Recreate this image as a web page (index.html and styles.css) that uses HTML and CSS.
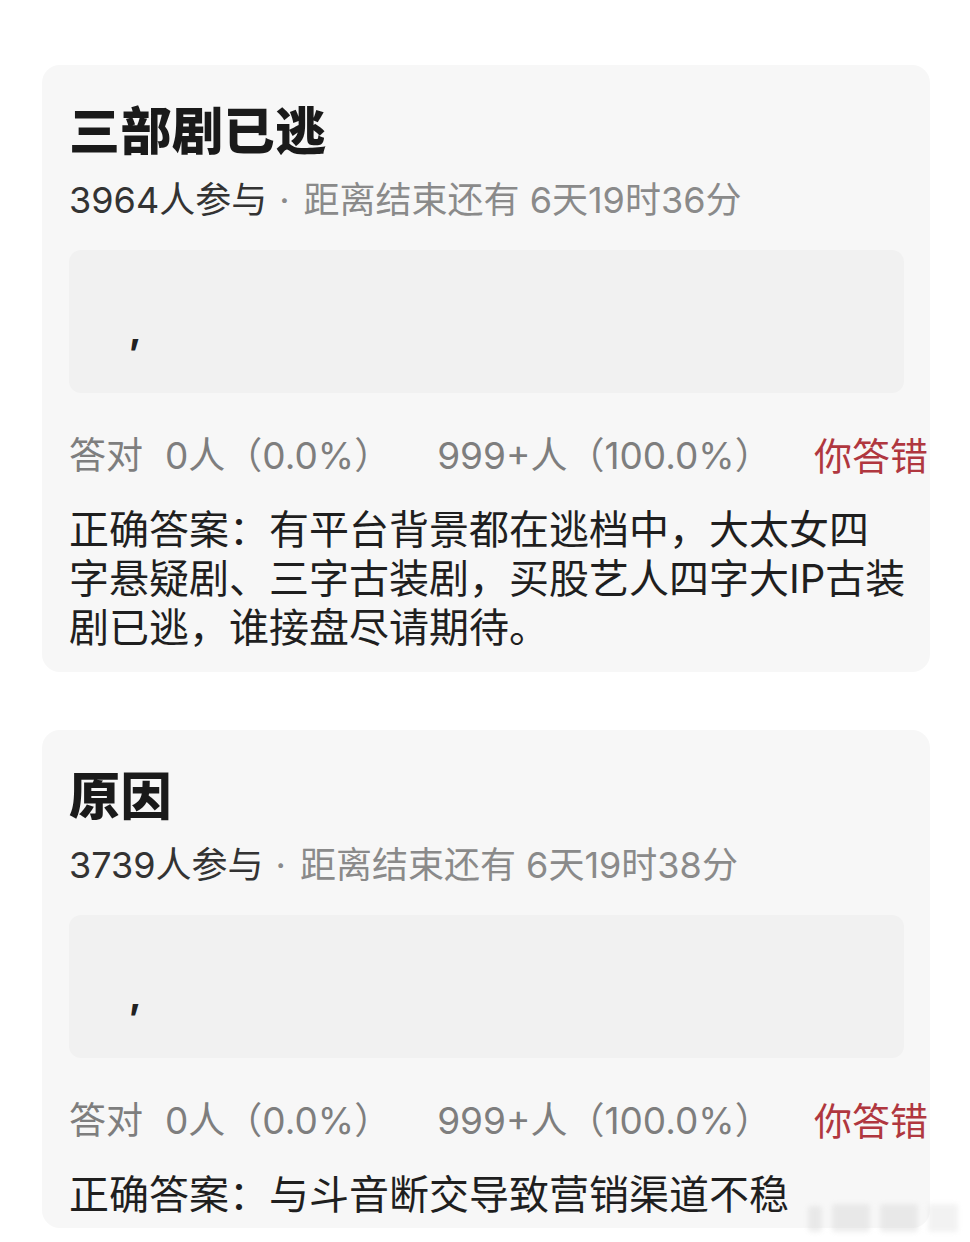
FILE: index.html
```html
<!DOCTYPE html>
<html lang="zh-CN">
<head>
<meta charset="utf-8">
<title>竞猜</title>
<link rel="stylesheet" href="styles.css">
</head>
<body>
<main class="feed">
  <section class="card">
    <h2 class="title">三部剧已逃</h2>
    <p class="meta"><span class="meta-count">3964人参与</span><span class="meta-sep">·</span><span class="meta-time">距离结束还有 6天19时36分</span></p>
    <div class="option"><span class="option-text">,</span></div>
    <div class="stats">
      <span class="stat-label">答对</span>
      <span class="stat-value">0人（0.0%）</span>
      <span class="stat-value stat-value--wide">999+人（100.0%）</span>
      <span class="verdict">你答错</span>
    </div>
    <p class="answer">正确答案：有平台背景都在逃档中，大太女四字悬疑剧、三字古装剧，买股艺人四字大IP古装剧已逃，谁接盘尽请期待。</p>
  </section>

  <section class="card card--tight">
    <h2 class="title">原因</h2>
    <p class="meta"><span class="meta-count">3739人参与</span><span class="meta-sep">·</span><span class="meta-time">距离结束还有 6天19时38分</span></p>
    <div class="option"><span class="option-text">,</span></div>
    <div class="stats">
      <span class="stat-label">答对</span>
      <span class="stat-value">0人（0.0%）</span>
      <span class="stat-value stat-value--wide">999+人（100.0%）</span>
      <span class="verdict">你答错</span>
    </div>
    <p class="answer">正确答案：与斗音断交导致营销渠道不稳</p>
  </section>
</main>
<div class="watermark" aria-hidden="true">
  <span class="wm-block wm-block--thin"></span>
  <span class="wm-block"></span>
  <span class="wm-block"></span>
  <span class="wm-block wm-block--light"></span>
</div>
</body>
</html>
```

FILE: styles.css
```css
html, body {
  margin: 0;
  padding: 0;
  background: #ffffff;
}

body {
  font-family: Inter, "Noto Sans CJK SC", sans-serif;
  color: #1f1f1f;
  width: 970px;
  min-height: 1242px;
  position: relative;
  overflow: hidden;
}

.feed {
  display: flex;
  flex-direction: column;
  gap: 58px;
  padding: 65px 0 0 42px;
}

.card {
  width: 888px;
  box-sizing: border-box;
  background: #f7f7f7;
  border-radius: 18px;
  padding: 33px 22px 20px 27px;
}

.card--tight {
  padding-bottom: 9px;
}

.title {
  margin: 0;
  font-family: "Noto Sans CJK SC", sans-serif;
  font-size: 51px;
  line-height: 60px;
  font-weight: 900;
  color: #1a1a1a;
  letter-spacing: 0.5px;
}

.meta {
  margin: 18px 0 0;
  font-size: 36px;
  line-height: 48px;
  color: #8a8a8a;
  white-space: nowrap;
}

.meta-count {
  color: #333333;
}

.meta-sep {
  margin: 0 14px 0 12px;
}

.option {
  margin: 26px 4px 0 0;
  height: 143px;
  background: #f1f1f1;
  border-radius: 12px;
  display: flex;
  align-items: center;
  padding-left: 60px;
  box-sizing: border-box;
}

.option-text {
  font-size: 38px;
  font-weight: 700;
  color: #222222;
  line-height: 48px;
  padding-top: 14px;
}

.stats {
  margin-top: 38px;
  margin-right: -20px;
  display: flex;
  align-items: center;
  font-size: 37px;
  line-height: 50px;
  color: #7e7e7e;
  white-space: nowrap;
}

.stat-label {
  margin-right: 22px;
}

.stat-value--wide {
  margin-left: 46px;
}

.verdict {
  margin-left: auto;
  color: #b0373f;
  font-size: 38px;
}

.answer {
  margin: 24px 0 0;
  font-size: 40px;
  line-height: 49px;
  color: #1f1f1f;
}

/* faint site watermark in the lower right corner */
.watermark {
  position: absolute;
  right: 12px;
  bottom: 10px;
  display: flex;
  align-items: flex-end;
  gap: 10px;
  filter: blur(2.5px);
  opacity: 0.4;
}

.wm-block {
  width: 38px;
  height: 28px;
  background: #d4d4d4;
  border-radius: 3px;
}

.wm-block--thin {
  width: 14px;
  height: 26px;
}

.wm-block--light {
  width: 30px;
  background: #e0e0e0;
}
```
